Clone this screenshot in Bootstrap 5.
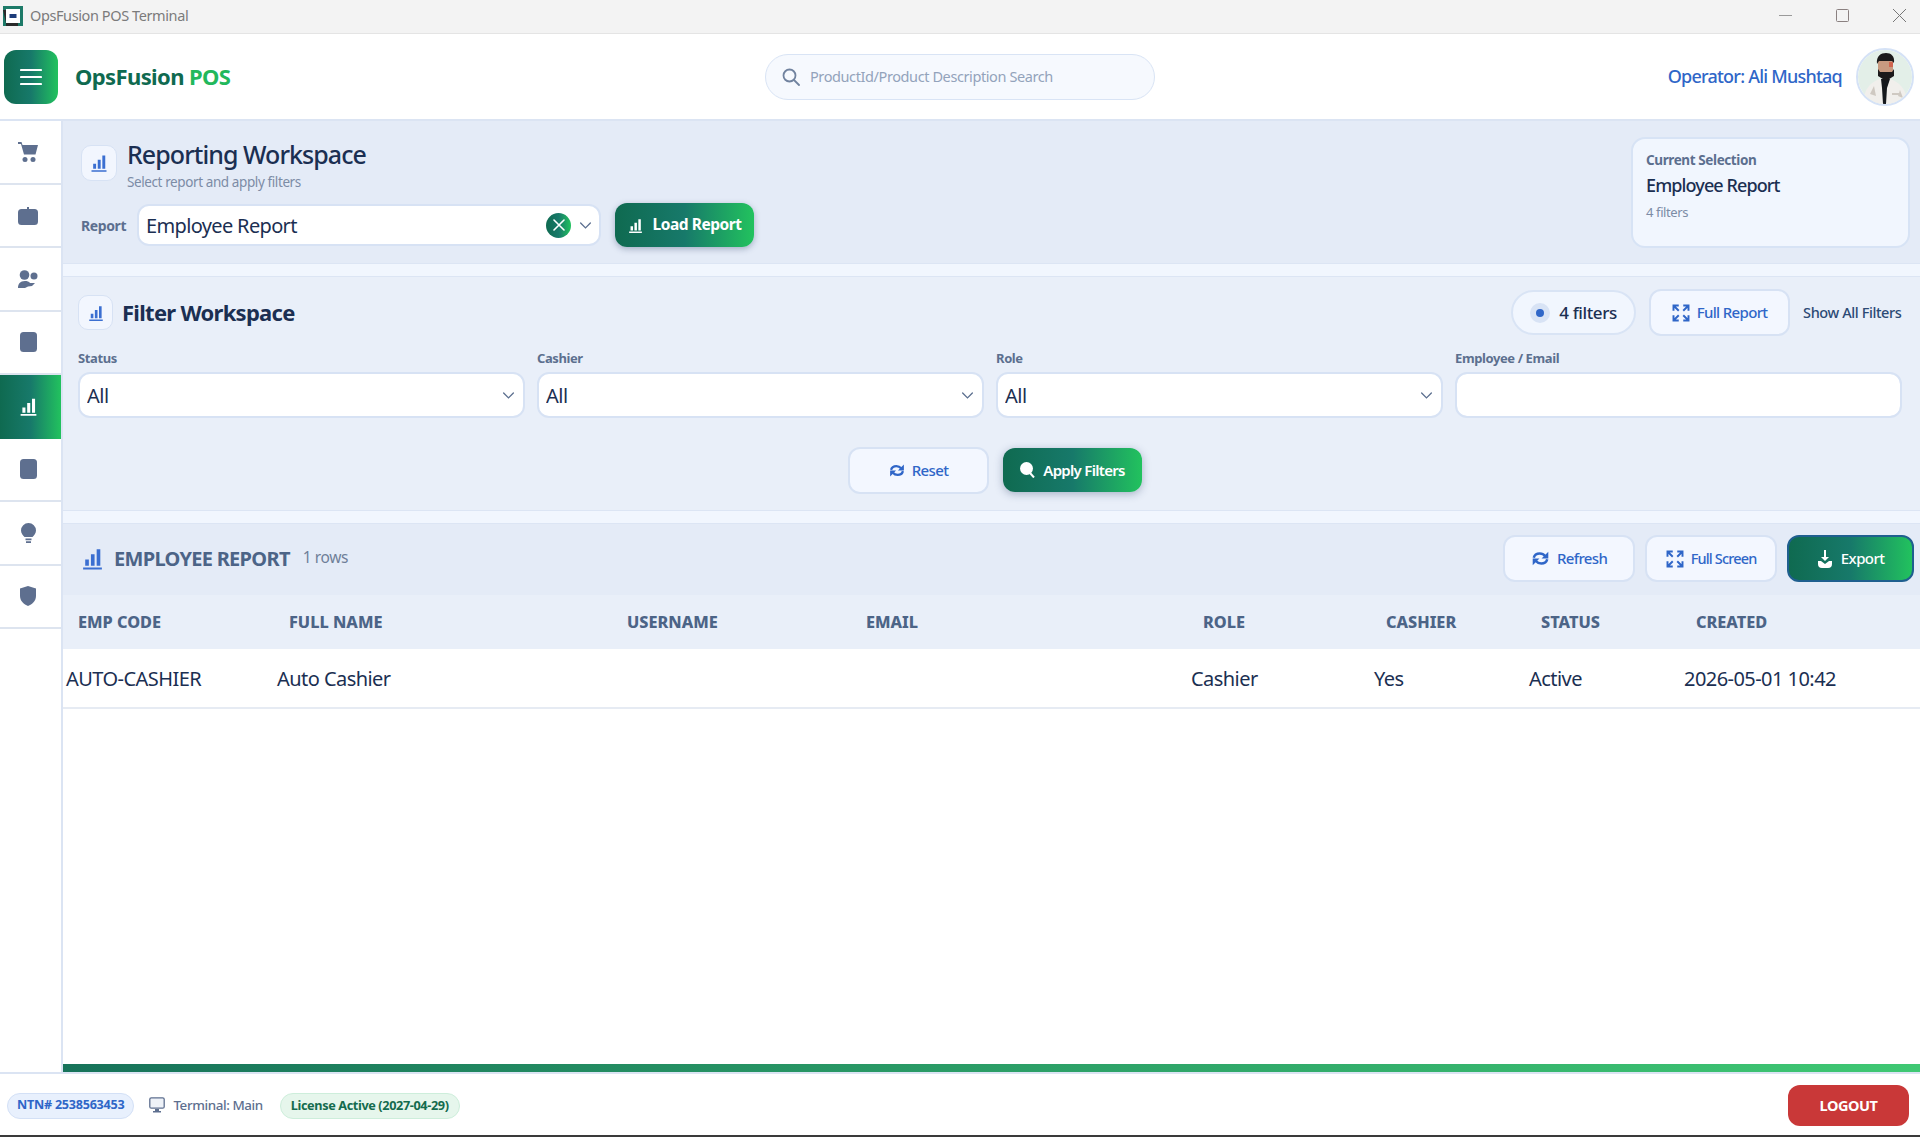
<!DOCTYPE html>
<html lang="en">
<head>
    <meta charset="UTF-8">
    <title>OpsFusion POS Terminal</title>
    <link rel="stylesheet" href="https://cdn.jsdelivr.net/npm/bootstrap@5.3.0/dist/css/bootstrap.min.css">
    <style>
        html, body { height: 100%; }
        body { font-family: "Noto Sans", "Open Sans", sans-serif; letter-spacing: -.025em; color: #1b2f52; height: 1137px; overflow: hidden; background: #fff; }
        .green-grad { background: linear-gradient(90deg, #0f6a50 0%, #17796a 50%, #22c25e 100%); color: #fff; }
        .title-bar { height: 34px; background: #f3f3f3; border-bottom: 1px solid #e4e4e4; font-size: 14.5px; color: #7b7b7b; padding: 0 0 2px 3px; }
        .title-text { margin-left: 7px; }
        .win-btns { gap: 44px; padding-right: 14px; }
        .top-head { height: 87px; border-bottom: 2px solid #dbe4f3; padding: 0 6px 0 4px; }
        .menu-btn { width: 54px; height: 54px; border-radius: 12px; border: 0; padding: 0; }
        .brand-name { font-size: 22px; font-weight: 700; color: #0f6a50; margin-left: 17px; width: 690px; letter-spacing: -.62px; }
        .brand-name span { color: #22b85c; }
        .top-search { width: 390px; height: 46px; border: 1px solid #d9e4f5; border-radius: 23px; background: #f6f9fe; padding-left: 16px; gap: 10px; font-size: 14.5px; color: #93a3bb; }
        .operator { font-size: 18px; font-weight: 500; color: #2f66c8; margin-right: 14px; letter-spacing: -.78px; }
        .avatar-round { width: 58px; height: 58px; border-radius: 50%; border: 2px solid #d5e2f6; overflow: hidden; flex: none; }
        .side-rail { width: 63px; border-right: 2px solid #dbe4f3; flex: none; height: 100%; }
        .rail-item { height: 63.5px; border-bottom: 2px solid #dde4ef; color: #5e6f8f; padding-right: 5px; }
        .rail-item.green-grad { color: #fff; border-bottom: 0; }
        .work-area { background: #f1f6fe; }
        .panel-a { height: 143px; background: #e4ebf7; border-bottom: 1px solid #dce5f4; padding: 16px 10px 0 18px; }
        .icon-box { width: 36px; height: 36px; border-radius: 10px; background: #f2f6fe; border: 1px solid #d7e2f4; color: #3b6fd1; margin-top: 8px; flex: none; }
        .page-title { font-size: 25px; font-weight: 500; line-height: 32px; margin: 1px 0 0 10px; color: #1b2f52; letter-spacing: -.95px; }
        .page-sub { font-size: 13.5px; line-height: 18px; margin: 3px 0 0 10px; color: #7c8ca6; }
        .field-tag { font-size: 14px; font-weight: 700; color: #5c6f8f; width: 56px; }
        .report-combo { width: 464px; height: 42px; background: #fff; border: 2px solid #d7e2f4; border-radius: 12px; font-size: 20px; padding: 0 7px 0 7px; letter-spacing: -.65px; }
        .report-combo > span:first-child { padding-top: 2px; }
        .clear-dot { width: 25px; height: 25px; border-radius: 50%; }
        .load-btn { width: 139px; height: 44px; border-radius: 12px; border: 0; margin-left: 14px; font-size: 15.5px; font-weight: 700; box-shadow: 0 2px 6px rgba(40, 60, 100, .35); gap: 8px; padding: 0; letter-spacing: -.45px; }
        .selection-box { width: 279px; height: 111px; border: 2px solid #d7e3f5; border-radius: 14px; background: #f1f6fe; padding: 12px 13px; }
        .sel-tag { font-size: 13.5px; font-weight: 700; color: #5c6f8f; line-height: 18px; }
        .sel-name { font-size: 18px; font-weight: 500; line-height: 24px; margin-top: 4px; letter-spacing: -.9px; }
        .sel-count { font-size: 13px; color: #7c8ca6; line-height: 18px; margin-top: 6px; }
        .panel-b { height: 235px; margin-top: 12px; background: #e9eff9; border-top: 1px solid #dce5f4; border-bottom: 1px solid #dce5f4; padding: 12px 18px 0 15px; }
        .icon-box.small-box { width: 35px; height: 35px; margin-top: 0; }
        .filter-title { font-size: 22px; font-weight: 700; margin-left: 9px; letter-spacing: -.72px; }
        .count-pill { width: 125px; height: 45px; border-radius: 23px; border: 2px solid #d9e4f5; background: #f1f6fe; font-size: 17px; font-weight: 500; gap: 9px; }
        .dot-ring { width: 20px; height: 20px; border-radius: 50%; background: #d8e3f5; }
        .dot-ring::after { content: ""; width: 8px; height: 8px; border-radius: 50%; background: #2f66c8; }
        .soft-btn { height: 47px; border: 2px solid #d7e2f4; border-radius: 12px; background: #f3f7ff; color: #2f66c8; font-size: 15px; font-weight: 500; gap: 7px; padding: 0; letter-spacing: -.65px; }
        .soft-btn:hover { background: #f3f7ff; color: #2f66c8; }
        .show-all { font-size: 14.5px; font-weight: 500; color: #2c4a75; margin: 0 -16px 0 13px; width: 115px; white-space: nowrap; }
        .filter-row { --bs-gutter-x: 12px; margin-top: 14px; width: 1836px; }
        .filter-row label { font-size: 13px; font-weight: 700; color: #5c6f8f; line-height: 16px; margin-bottom: 6px; display: block; }
        .filter-row .form-select, .filter-row .form-control { height: 46px; border: 2px solid #d7e2f4; border-radius: 12px; font-size: 20px; color: #1b2f52; padding: 2px 0 0 7px; letter-spacing: -.025em; box-shadow: none; }
        .filter-row .form-select { background-image: url("data:image/svg+xml,%3csvg xmlns='http://www.w3.org/2000/svg' viewBox='0 0 16 16'%3e%3cpath fill='none' stroke='%235b6f8f' stroke-linecap='round' stroke-width='1.6' d='M2 5l6 6 6-6'/%3e%3c/svg%3e"); background-size: 13px 13px; background-position: right 8px center; }
        .filter-actions { gap: 14px; margin-top: 29px; padding-left: 10px; }
        .reset-btn { width: 141px; }
        .apply-btn { width: 139px; height: 44px; margin-top: 1px; border-radius: 12px; border: 0; font-size: 15px; font-weight: 600; gap: 8px; padding: 0; box-shadow: 0 2px 8px rgba(40, 60, 100, .35); letter-spacing: -.7px; }
        .panel-c { height: 72px; margin-top: 12px; background: #e4ebf7; border-top: 1px solid #dce5f4; padding: 11px 6px 0 18px; }
        .report-title { font-size: 20px; font-weight: 700; color: #4c6487; margin-left: 9px; letter-spacing: -.7px; padding-top: 1px; }
        .rows-note { font-size: 15.5px; color: #6f7f99; margin-left: 13px; margin-top: -2px; }
        .export-btn { width: 127px; height: 47px; border-radius: 12px; border: 2px solid #1f5f8f; font-size: 15px; font-weight: 500; gap: 8px; padding: 0; letter-spacing: -.6px; }
        .data-wrap { flex: 1 1 auto; background: #fff; }
        .data-grid { table-layout: fixed; width: 100%; margin: 0; --bs-table-bg: transparent; }
        .data-grid th { height: 54px; background: #e9eff9; color: #4c6487; font-size: 16.3px; font-weight: 800; padding: 0 0 0 15px; vertical-align: middle; border-bottom: 0; letter-spacing: 0; }
        .data-grid td { height: 59px; font-size: 20px; color: #1b2f52; padding: 2px 0 0 3px; vertical-align: middle; border-bottom: 2px solid #e6ebf3; background: #fff; letter-spacing: -.55px; }
        .c-code { width: 211px; } .c-name { width: 338px; } .c-user { width: 239px; } .c-mail { width: 337px; }
        .c-role { width: 183px; } .c-cash { width: 155px; } .c-stat { width: 155px; }
        .load-strip { height: 8px; background: linear-gradient(90deg, #17735a, #3fc873); flex: none; }
        .bottom-bar { height: 65px; border-top: 2px solid #dbe4f3; border-bottom: 2px solid #3a3a3a; padding: 2px 11px 0 7px; flex: none; }
        .ntn-pill, .lic-pill { height: 26px; border-radius: 13px; font-weight: 700; letter-spacing: -.02em; }
        .ntn-pill { background: #e8f0fd; border: 1px solid #d3e0f6; color: #2f66c8; font-size: 12.6px; padding: 0 9px; }
        .lic-pill { background: #e6f6ec; border: 1px solid #cdeedb; color: #146b4e; margin-left: 17px; font-size: 12.7px; padding: 0 10px; letter-spacing: -.03em; }
        .term-note { font-size: 13.4px; font-weight: 500; color: #5e6f8f; margin-left: 15px; gap: 8px; }
        .logout-btn { width: 121px; height: 41px; border-radius: 12px; border: 0; background: #c93838; color: #fff; font-size: 14.5px; font-weight: 700; padding: 0; letter-spacing: -.03em; }
    </style>
</head>
<body class="d-flex flex-column">

<svg width="0" height="0" class="position-absolute">
    <symbol id="i-bars" viewBox="0 0 24 24"><path fill="currentColor" d="M5 13h3.500v6H5zM10.500 8H14v11h-3.500zM16 3h3.500v16H16zM3 20.600h18v2H3z"/></symbol>
    <symbol id="i-expand" viewBox="0 0 24 24"><path fill="none" stroke="currentColor" stroke-width="2.600" d="M2 9V2h7M15 2h7v7M22 15v7h-7M9 22H2v-7M2 2l7 7M22 2l-7 7M22 22l-7-7M2 22l7-7"/></symbol>
    <symbol id="i-sync" viewBox="0 0 24 24"><path fill="none" stroke="currentColor" stroke-width="3.600" d="M2.500 11C3.500 7 7 5 11 5c3 0 5.500 1 7.500 3.500M21.500 13c-1 4-4.500 6-8.500 6-3 0-5.500-1-7.500-3.500"/><path fill="currentColor" d="M23 2.500V12h-9.500zM1 21.500V12h9.500z"/></symbol>
</svg>

<!-- window title bar -->
<div class="title-bar d-flex align-items-center flex-none">
    <svg width="20" height="20" viewBox="0 0 20 20"><rect width="20" height="20" fill="#1d7a68"/><path fill="#2a2a2a" d="M0 4h3v16h12v-3H3z"/><rect x="3" y="3" width="14" height="14" fill="#fff"/><rect x="6.500" y="8" width="7" height="4" fill="#1d3d7a"/></svg>
    <span class="title-text">OpsFusion POS Terminal</span>
    <div class="win-btns d-flex align-items-center ms-auto">
        <svg width="13" height="13" viewBox="0 0 13 13"><path stroke="#9a9a9a" d="M0 6.500h13"/></svg>
        <svg width="13" height="13" viewBox="0 0 13 13"><rect x=".5" y=".5" width="12" height="12" rx="1" fill="none" stroke="#8a8080"/></svg>
        <svg width="13" height="13" viewBox="0 0 13 13"><path stroke="#777" d="M0 0l13 13M13 0L0 13"/></svg>
    </div>
</div>

<!-- app header -->
<header class="top-head d-flex align-items-center flex-none">
    <button class="menu-btn green-grad d-flex align-items-center justify-content-center" type="button">
        <svg width="22" height="18" viewBox="0 0 22 18"><path stroke="#fff" stroke-width="2.200" stroke-linecap="round" d="M1 2h20M1 9h20M1 16h20"/></svg>
    </button>
    <div class="brand-name">OpsFusion <span>POS</span></div>
    <div class="top-search d-flex align-items-center">
        <svg width="18" height="18" viewBox="0 0 18 18"><circle cx="7.500" cy="7.500" r="6" fill="none" stroke="#71839f" stroke-width="1.800"/><path stroke="#71839f" stroke-width="1.800" stroke-linecap="round" d="M12 12l5 5"/></svg>
        <span>ProductId/Product Description Search</span>
    </div>
    <div class="operator ms-auto">Operator: Ali Mushtaq</div>
    <div class="avatar-round">
        <svg width="54" height="54" viewBox="0 0 54 54">
            <rect width="54" height="54" fill="#e3efe8"/>
            <path fill="#f1efec" d="M5 54c1-16 8-22 17-25h10c9 3 16 9 18 25z"/>
            <path fill="#cfc9c2" d="M12 44l4-8 2 10zM42 40l3 8-5-2zM34 43h7v2h-7z"/>
            <path fill="#15181d" d="M23 29h9l-3 9-1 16h-3l-1-16z"/>
            <path fill="#c89a80" d="M20 11h15v12l-7 6-8-6z"/>
            <path fill="#d0664f" d="M31 12h4v5h-4z"/>
            <path fill="#1c1a1b" d="M19 14c-1-8 4-11 9-11s9 3 8 10l-2-2H21zM20 19l2 3h12l2-3v7l-8 5-8-5z"/>
        </svg>
    </div>
</header>

<div class="d-flex flex-grow-1" style="min-height:0">
    <!-- left rail -->
    <nav class="side-rail bg-white">
        <div class="rail-item d-flex align-items-center justify-content-center">
            <svg width="22" height="22" viewBox="0 0 22 22"><path fill="currentColor" d="M1 1h3.500l1 3H21l-2.500 9.500H7L4 3H1z"/><circle cx="8" cy="18.500" r="2.500" fill="currentColor"/><circle cx="16" cy="18.500" r="2.500" fill="currentColor"/></svg>
        </div>
        <div class="rail-item d-flex align-items-center justify-content-center">
            <svg width="20" height="19" viewBox="0 0 20 19"><path fill="currentColor" d="M3.500 3H9V1h2v2h5.500A3.500 3.500 0 0 1 20 6.500v9a3.500 3.500 0 0 1-3.500 3.500h-13A3.500 3.500 0 0 1 0 15.500v-9A3.500 3.500 0 0 1 3.500 3z"/></svg>
        </div>
        <div class="rail-item d-flex align-items-center justify-content-center">
            <svg width="20" height="18" viewBox="0 0 20 18"><circle cx="6.500" cy="5" r="4.800" fill="currentColor"/><circle cx="16" cy="6" r="3.500" fill="currentColor"/><path fill="currentColor" d="M0 18c0-4 2-7 7-7 2 0 4 .6 5 2h5l-3 3-4 .5-3 1.500z"/></svg>
        </div>
        <div class="rail-item d-flex align-items-center justify-content-center">
            <svg width="17" height="20" viewBox="0 0 17 20"><rect width="17" height="20" rx="3.500" fill="currentColor"/></svg>
        </div>
        <div class="rail-item green-grad d-flex align-items-center justify-content-center">
            <svg width="21" height="21"><use href="#i-bars"/></svg>
        </div>
        <div class="rail-item d-flex align-items-center justify-content-center">
            <svg width="17" height="20" viewBox="0 0 17 20"><rect width="17" height="20" rx="3.500" fill="currentColor"/></svg>
        </div>
        <div class="rail-item d-flex align-items-center justify-content-center">
            <svg width="15" height="20" viewBox="0 0 15 20"><path fill="currentColor" d="M7.500 0A7.500 7.500 0 0 1 15 7.500c0 3-2 5-3.500 6.500h-8C2 12.500 0 10.500 0 7.500A7.500 7.500 0 0 1 7.500 0zM4.500 15.500h6v1.800h-6zM5 18.200h5V20H5z"/></svg>
        </div>
        <div class="rail-item d-flex align-items-center justify-content-center">
            <svg width="16" height="20" viewBox="0 0 16 20"><path fill="currentColor" d="M8 0l8 2.500V10c0 5-4 8.500-8 10-4-1.500-8-5-8-10V2.500z"/></svg>
        </div>
    </nav>

    <main class="work-area flex-grow-1 d-flex flex-column" style="min-width:0">
        <!-- report picker -->
        <section class="panel-a d-flex justify-content-between">
            <div>
                <div class="d-flex">
                    <div class="icon-box d-flex align-items-center justify-content-center"><svg width="20" height="20"><use href="#i-bars"/></svg></div>
                    <div>
                        <h1 class="page-title">Reporting Workspace</h1>
                        <p class="page-sub mb-0">Select report and apply filters</p>
                    </div>
                </div>
                <div class="d-flex align-items-center" style="margin-top:12px">
                    <span class="field-tag">Report</span>
                    <div class="report-combo d-flex align-items-center">
                        <span class="flex-grow-1">Employee Report</span>
                        <span class="clear-dot green-grad d-flex align-items-center justify-content-center"><svg width="12" height="12" viewBox="0 0 12 12"><path stroke="#fff" stroke-width="1.600" stroke-linecap="round" d="M1 1l10 10M11 1L1 11"/></svg></span>
                        <svg class="ms-2" width="13" height="13" viewBox="0 0 16 16"><path fill="none" stroke="#5b6f8f" stroke-width="1.600" stroke-linecap="round" d="M2 5l6 6 6-6"/></svg>
                    </div>
                    <button class="btn load-btn green-grad d-flex align-items-center justify-content-center" type="button"><svg width="17" height="17"><use href="#i-bars"/></svg>Load Report</button>
                </div>
            </div>
            <div class="selection-box">
                <div class="sel-tag">Current Selection</div>
                <div class="sel-name">Employee Report</div>
                <div class="sel-count">4 filters</div>
            </div>
        </section>

        <!-- filters -->
        <section class="panel-b">
            <div class="d-flex align-items-center">
                <div class="icon-box small-box d-flex align-items-center justify-content-center"><svg width="18" height="18"><use href="#i-bars"/></svg></div>
                <h2 class="filter-title mb-0">Filter Workspace</h2>
                <div class="count-pill d-flex align-items-center justify-content-center ms-auto"><span class="dot-ring d-flex align-items-center justify-content-center"></span>4 filters</div>
                <button class="btn soft-btn d-flex align-items-center justify-content-center" style="width:141px;margin-left:13px" type="button"><svg width="18" height="18"><use href="#i-expand"/></svg>Full Report</button>
                <span class="show-all">Show All Filters</span>
            </div>
            <div class="row filter-row">
                <div class="col-3"><label>Status</label><select class="form-select"><option>All</option></select></div>
                <div class="col-3"><label>Cashier</label><select class="form-select"><option>All</option></select></div>
                <div class="col-3"><label>Role</label><select class="form-select"><option>All</option></select></div>
                <div class="col-3"><label>Employee / Email</label><input class="form-control" type="text"></div>
            </div>
            <div class="filter-actions d-flex justify-content-center">
                <button class="btn soft-btn reset-btn d-flex align-items-center justify-content-center" type="button"><svg width="16" height="15"><use href="#i-sync"/></svg>Reset</button>
                <button class="btn apply-btn green-grad d-flex align-items-center justify-content-center" type="button">
                    <svg width="15" height="16" viewBox="0 0 15 16"><circle cx="6.500" cy="6.500" r="6.500" fill="#fff"/><path stroke="#fff" stroke-width="2" d="M10 11l4 4.500"/></svg>Apply Filters</button>
            </div>
        </section>

        <!-- report head -->
        <section class="panel-c d-flex">
            <div class="d-flex align-items-center" style="height:47px">
                <svg width="25" height="25" style="color:#3b6fd1;margin-left:-1px"><use href="#i-bars"/></svg>
                <span class="report-title">EMPLOYEE REPORT</span>
                <span class="rows-note">1 rows</span>
            </div>
            <div class="d-flex ms-auto" style="gap:10px">
                <button class="btn soft-btn d-flex align-items-center justify-content-center" style="width:132px" type="button"><svg width="19" height="17"><use href="#i-sync"/></svg>Refresh</button>
                <button class="btn soft-btn d-flex align-items-center justify-content-center" style="width:132px;font-size:14.5px;letter-spacing:-.85px" type="button"><svg width="18" height="18"><use href="#i-expand"/></svg>Full Screen</button>
                <button class="btn export-btn green-grad d-flex align-items-center justify-content-center" type="button">
                    <svg width="16" height="18" viewBox="0 0 16 18"><path fill="#fff" d="M7 0h2v7h3l-4 4-4-4h3zM1 11h3l4 3 4-3h3v3a4 4 0 0 1-4 4H5a4 4 0 0 1-4-4z"/></svg>Export</button>
            </div>
        </section>

        <!-- table -->
        <div class="data-wrap">
            <table class="table data-grid">
                <colgroup><col class="c-code"><col class="c-name"><col class="c-user"><col class="c-mail"><col class="c-role"><col class="c-cash"><col class="c-stat"><col></colgroup>
                <thead>
                    <tr><th>EMP CODE</th><th>FULL NAME</th><th>USERNAME</th><th>EMAIL</th><th>ROLE</th><th>CASHIER</th><th>STATUS</th><th>CREATED</th></tr>
                </thead>
                <tbody>
                    <tr><td>AUTO-CASHIER</td><td>Auto Cashier</td><td></td><td></td><td>Cashier</td><td>Yes</td><td>Active</td><td>2026-05-01 10:42</td></tr>
                </tbody>
            </table>
        </div>
        <div class="load-strip"></div>
    </main>
</div>

<!-- status bar -->
<footer class="bottom-bar d-flex align-items-center">
    <span class="ntn-pill d-flex align-items-center">NTN# 2538563453</span>
    <span class="term-note d-flex align-items-center">
        <svg width="16" height="16" viewBox="0 0 16 16"><rect x=".8" y=".8" width="14.400" height="10.400" rx="1.500" fill="#eef2f8" stroke="#5e6f8f" stroke-width="1.300"/><path fill="#5e6f8f" d="M6 12h4v2H6zM4 14h8v1.500H4z"/></svg>
        Terminal: Main
    </span>
    <span class="lic-pill d-flex align-items-center">License Active (2027-04-29)</span>
    <button class="logout-btn ms-auto" type="button">LOGOUT</button>
</footer>

<script src="https://cdn.jsdelivr.net/npm/bootstrap@5.3.0/dist/js/bootstrap.bundle.min.js"></script>
</body>
</html>
